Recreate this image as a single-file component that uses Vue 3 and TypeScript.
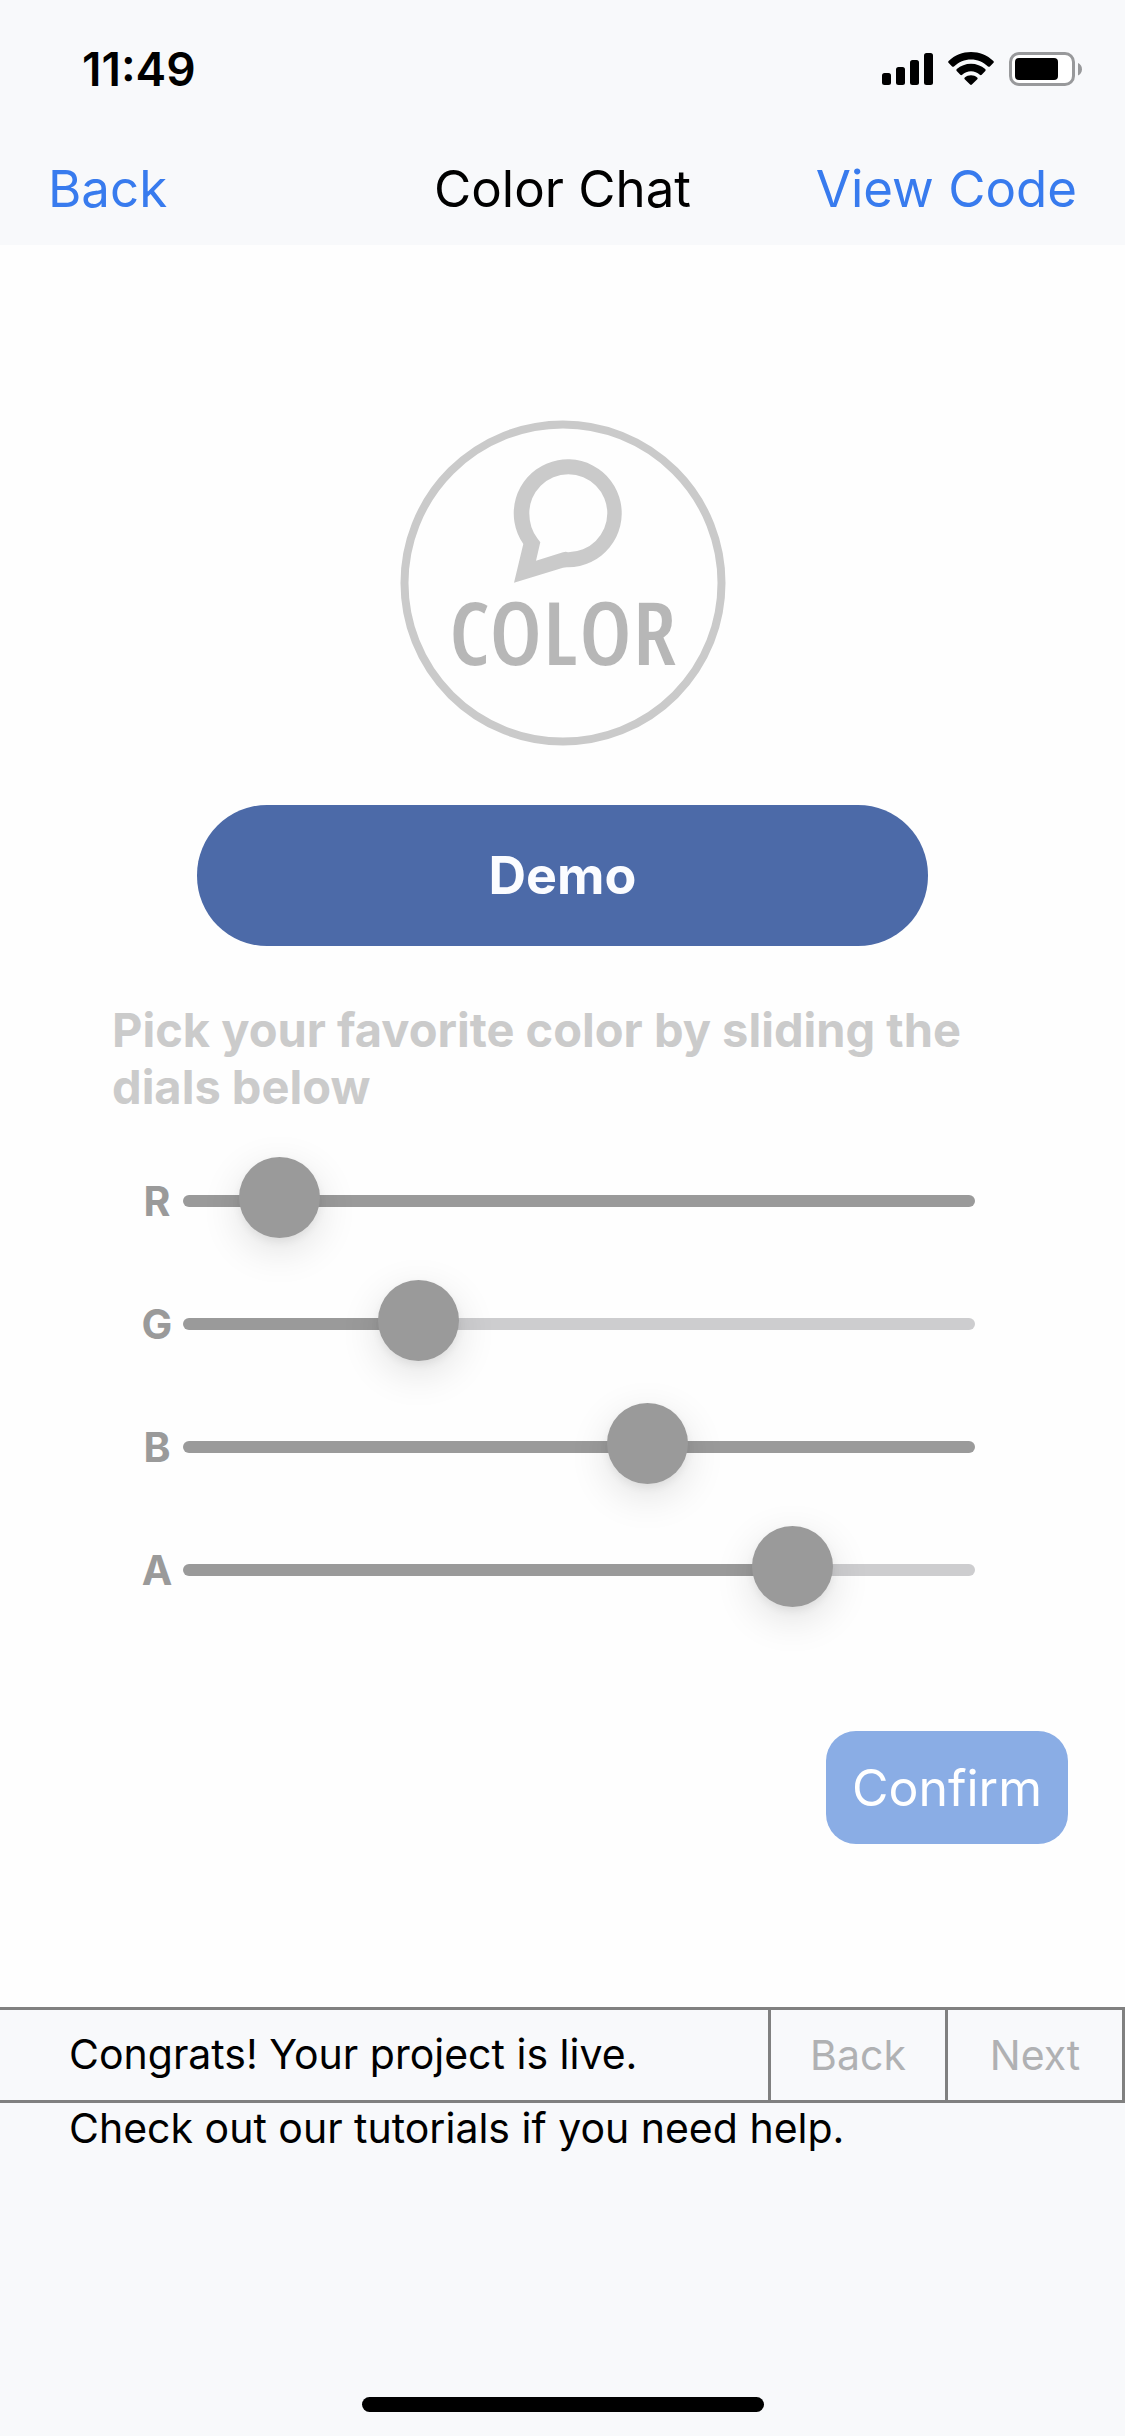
<script setup lang="ts">
import { reactive } from 'vue'

interface Channel {
  id: string
  value: number
  // Channels with a solid track show no lighter remainder after the thumb
  solid: boolean
}

const channels = reactive<Channel[]>([
  { id: 'R', value: 20, solid: true },
  { id: 'G', value: 70, solid: false },
  { id: 'B', value: 152, solid: true },
  { id: 'A', value: 204, solid: false },
])

const fill = (c: Channel): string => (c.solid ? '100%' : `${(c.value / 255) * 100}%`)
</script>

<template>
  <div class="screen">
    <header class="header">
      <div class="status">
        <time class="clock">11:49</time>
        <svg class="status-icons" width="200" height="34" viewBox="0 0 200 34" role="img" aria-label="Signal, Wi-Fi and battery">
          <g fill="#000">
            <rect x="0" y="21" width="9" height="12" rx="2.5" />
            <rect x="14" y="15" width="9" height="18" rx="2.5" />
            <rect x="28" y="8" width="9" height="25" rx="2.5" />
            <rect x="42" y="1" width="9" height="32" rx="2.5" />
            <path d="M66.5 10.800Q65.600 9.800 66.600 8.900C72.800 3.200 80.700 0 89 0s16.200 3.200 22.400 8.900q1 .9 .1 1.900l-3.600 3.600q-.9 .9-1.900 0C101.300 10 95.300 7.400 89 7.400S76.700 10 72 14.400q-1 .9-1.900 0z" />
            <path d="M74.700 19q-.9-.9 .1-1.900C78.700 13.700 83.700 11.700 89 11.700s10.300 2 14.200 5.400q1 1 .1 1.900l-3.600 3.700q-.9 .9-1.900 .1C95.400 20.500 92.300 19.300 89 19.300s-6.400 1.200-8.800 3.500q-1 .8-1.900-.1z" />
            <path d="M82.700 27.200q-.9-1 .1-1.800C84.500 24 86.700 23.200 89 23.200s4.500 .8 6.200 2.200q1 .8 .1 1.800l-5.400 5.400q-.9 .9-1.800 0z" />
          </g>
          <rect x="128.500" y="1.500" width="63" height="31" rx="8.500" fill="#fff" stroke="#98999b" stroke-width="3" />
          <rect x="133" y="6" width="43" height="22" rx="4" fill="#000" />
          <path d="M196 11c2.500 1 4 3.400 4 6.300s-1.500 5.200-4 6.200z" fill="#98999b" />
        </svg>
      </div>
      <nav class="nav">
        <a class="nav-link" href="#back">Back</a>
        <h1 class="title">Color Chat</h1>
        <a class="nav-link nav-end" href="#code">View Code</a>
      </nav>
    </header>

    <main class="main">
      <svg class="logo" width="326" height="326" viewBox="0 0 326 326" role="img" aria-label="Color">
        <circle cx="163" cy="163" r="158.500" fill="none" stroke="#cacaca" stroke-width="8" />
        <path
          fill="#cacaca"
          fill-rule="evenodd"
          d="M123.300 124A54 54 0 1 1 168 147.300Q166 147 163 147.700L114 162.700ZM140.300 122.300L136 140.700L163 132.200Q166 131.300 168 132.200A39 39 0 1 0 129.300 93.300Q129.300 108 137.500 118.500Z"
        />
        <text class="logo-text" x="163" y="246" text-anchor="middle">COLOR</text>
      </svg>

      <button class="demo" type="button">Demo</button>

      <p class="prompt">Pick your favorite color by sliding the dials below</p>

      <div class="sliders">
        <div v-for="c in channels" :key="c.id" class="slider-row">
          <label class="slider-label" :for="`channel-${c.id}`">{{ c.id }}</label>
          <input
            :id="`channel-${c.id}`"
            v-model.number="c.value"
            class="slider"
            type="range"
            min="0"
            max="255"
            :style="{ '--fill': fill(c) }"
          />
        </div>
      </div>

      <button class="confirm" type="button">Confirm</button>
    </main>

    <footer class="footer">
      <div class="toolbar">
        <p class="message">Congrats! Your project is live.</p>
        <button class="step" type="button" disabled>Back</button>
        <button class="step" type="button" disabled>Next</button>
      </div>
      <p class="hint">Check out our tutorials if you need help.</p>
      <div class="home-bar"></div>
    </footer>
  </div>
</template>

<style>
body {
  margin: 0;
  background: #fefefe;
}
</style>

<style scoped>
.screen {
  display: flex;
  flex-direction: column;
  min-height: 100vh;
  font-family: Inter, "Liberation Sans", sans-serif;
  color: #000;
  background: #fefefe;
}

.screen * {
  box-sizing: border-box;
}

button {
  font-family: inherit;
  border: 0;
  padding: 0;
}

p,
h1 {
  margin: 0;
}

.header {
  background: #f8f9fb;
}

.status {
  display: flex;
  justify-content: space-between;
  align-items: center;
  height: 138px;
  padding: 0 43px 0 82px;
}

.clock {
  font-size: 46px;
  font-weight: 600;
  line-height: 54px;
}

.nav {
  display: grid;
  grid-template-columns: 1fr auto 1fr;
  align-items: start;
  height: 107px;
  padding: 0 48px;
  font-size: 51px;
  line-height: 102px;
}

.nav-link {
  color: #387bee;
  text-decoration: none;
}

.nav-end {
  text-align: right;
}

.title {
  font-size: inherit;
  font-weight: 400;
}

.main {
  display: flex;
  flex-direction: column;
  flex: 1;
  padding-top: 175px;
}

.logo {
  align-self: center;
}

.logo-text {
  font-family: "Open Sans Condensed", "Roboto Condensed", "Liberation Sans Narrow", "Liberation Sans", sans-serif;
  font-size: 90px;
  font-weight: 700;
  fill: #b7b7b7;
  /* Background-coloured outline slims the bold strokes */
  stroke: #fefefe;
  stroke-width: 2px;
}

.demo {
  align-self: center;
  width: 65%;
  height: 141px;
  margin-top: 59px;
  border-radius: 70px;
  background: #4c6aa8;
  color: #fbfcff;
  font-size: 52px;
  font-weight: 700;
}

.prompt {
  margin-top: 55px;
  padding: 0 112px;
  color: #cbcbcb;
  font-size: 47px;
  font-weight: 700;
  line-height: 57px;
}

.sliders {
  display: flex;
  flex-direction: column;
  gap: 43px;
  margin-top: 46px;
  padding: 0 150px 0 138px;
}

.slider-row {
  display: flex;
  align-items: center;
  gap: 5px;
  height: 80px;
}

.slider-label {
  width: 38px;
  margin-right: 2px;
  text-align: center;
  color: #9a9a9a;
  font-size: 41px;
  font-weight: 700;
  line-height: 80px;
}

.slider {
  flex: 1;
  min-width: 0;
  height: 12px;
  margin: 0;
  appearance: none;
  border-radius: 6px;
  background: linear-gradient(to right, #9a9a9a var(--fill), #cdcdcf var(--fill));
}

.slider::-webkit-slider-runnable-track {
  height: 12px;
}

.slider::-webkit-slider-thumb {
  appearance: none;
  width: 81px;
  height: 81px;
  margin-top: -38px;
  border-radius: 50%;
  background: #9a9a9a;
  box-shadow: 0 12px 40px rgba(0, 0, 0, 0.12), 0 4px 8px rgba(0, 0, 0, 0.06);
}

.confirm {
  align-self: flex-end;
  height: 113px;
  margin: 121px 57px 0 0;
  padding: 0 26px;
  border-radius: 30px;
  background: #8aade5;
  color: #fff;
  font-size: 50px;
}

.footer {
  display: flex;
  flex-direction: column;
  min-height: 429px;
  background: #f8f9fb;
  font-size: 41px;
}

.toolbar {
  display: flex;
  height: 96px;
  border: 3px solid #808080;
  border-left: 0;
}

.message {
  flex: 1;
  padding-left: 69px;
  line-height: 88px;
}

.step {
  width: 177px;
  border-left: 3px solid #808080;
  background: none;
  color: #b0b1b3;
  font-size: inherit;
  line-height: 88px;
}

.hint {
  padding-left: 69px;
  line-height: 50px;
}

.home-bar {
  width: 402px;
  height: 15px;
  margin: auto auto 24px;
  border-radius: 8px;
  background: #000;
}
</style>
